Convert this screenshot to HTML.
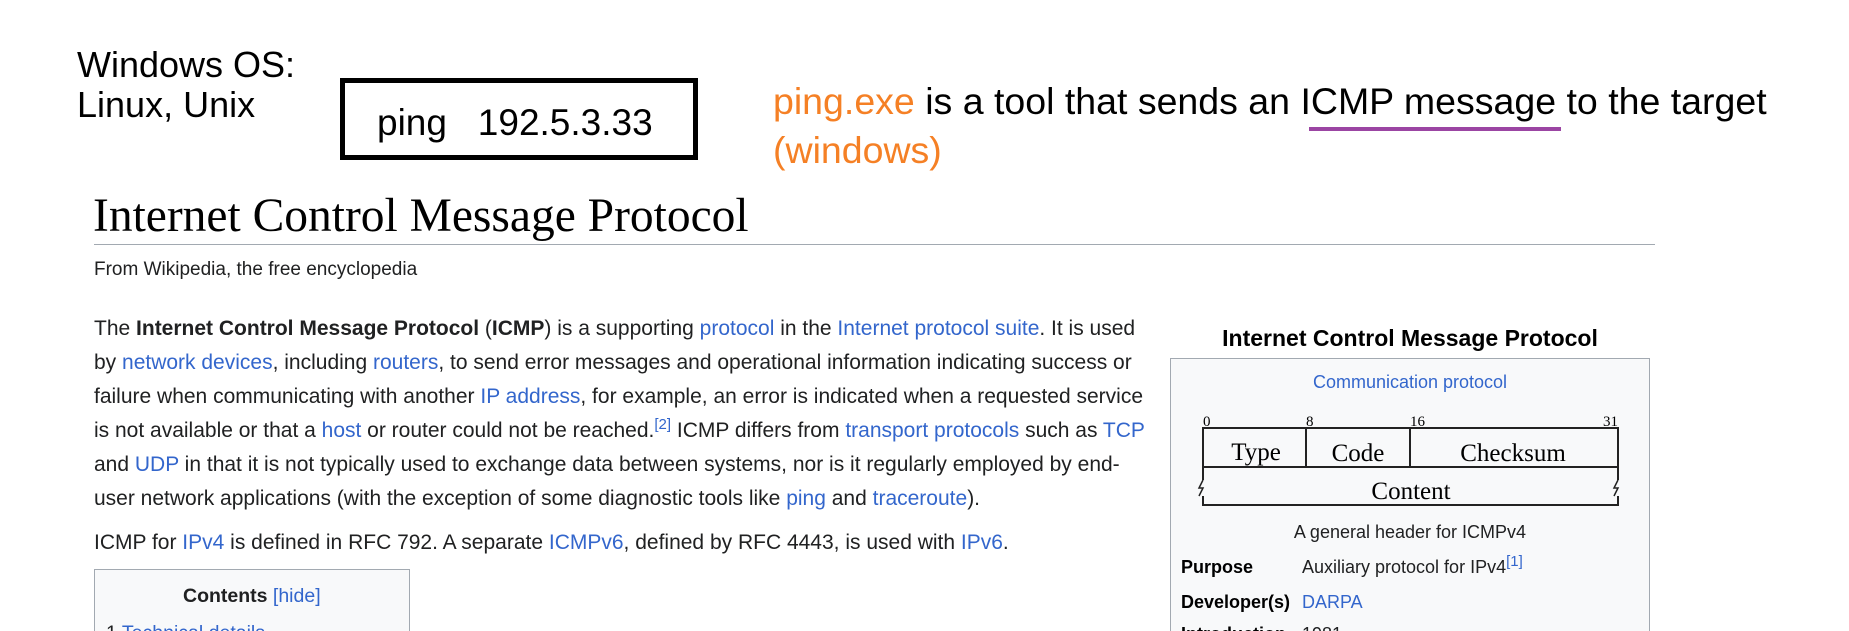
<!DOCTYPE html>
<html><head><meta charset="utf-8"><style>
*{margin:0;padding:0;box-sizing:border-box}
html,body{width:1849px;height:631px;overflow:hidden;background:#fff}
body{font-family:"Liberation Sans",sans-serif;color:#202122}
#w{position:relative;width:1849px;height:631px;overflow:hidden}
.a{position:absolute;white-space:nowrap}
.big{font-size:36px;color:#000;line-height:1}
.or{color:#f58025}
a,.l{color:#3366cc;text-decoration:none}
.body{font-size:21px;line-height:34px;color:#202122}
sup{font-size:15px;line-height:0;vertical-align:super}
.ib{position:absolute;left:1170px;top:358px;width:480px;height:273px;background:#f8f9fa;border:1px solid #a2a9b1;border-bottom:none}
</style></head><body><div id="w">
<div class="a big" style="left:77px;top:47px">Windows OS:</div>
<div class="a big" style="left:77px;top:87px">Linux, Unix</div>
<div class="a" style="left:340px;top:78px;width:358px;height:82px;border:5px solid #000"></div>
<div class="a big" style="left:377px;top:104px;font-size:37px">ping&nbsp;&nbsp;&nbsp;192.5.3.33</div>
<div class="a big" style="left:773px;top:83px;font-size:37.5px"><span class="or">ping.exe</span> is a tool that sends an ICMP message to the target</div>
<div class="a big or" style="left:773px;top:132px;font-size:37.5px">(windows)</div>
<div class="a" style="left:1309px;top:127px;width:252px;height:4px;background:#9b45a3"></div>

<div class="a" style="left:93px;top:188px;font-family:'Liberation Serif',serif;font-size:47.5px;color:#000;line-height:1.2">Internet Control Message Protocol</div>
<div class="a" style="left:94px;top:244px;width:1561px;height:1px;background:#a2a9b1"></div>
<div class="a" style="left:94px;top:259px;font-size:19px">From Wikipedia, the free encyclopedia</div>

<div class="a body" style="left:94px;top:312px">
The <b>Internet Control Message Protocol</b> (<b>ICMP</b>) is a supporting <a>protocol</a> in the <a>Internet protocol suite</a>. It is used<br>
by <a>network devices</a>, including <a>routers</a>, to send error messages and operational information indicating success or<br>
failure when communicating with another <a>IP address</a>, for example, an error is indicated when a requested service<br>
is not available or that a <a>host</a> or router could not be reached.<sup class="l">[2]</sup> ICMP differs from <a>transport protocols</a> such as <a>TCP</a><br>
and <a>UDP</a> in that it is not typically used to exchange data between systems, nor is it regularly employed by end-<br>
user network applications (with the exception of some diagnostic tools like <a>ping</a> and <a>traceroute</a>).
</div>
<div class="a body" style="left:94px;top:526px">ICMP for <a>IPv4</a> is defined in RFC 792. A separate <a>ICMPv6</a>, defined by RFC 4443, is used with <a>IPv6</a>.</div>

<div class="a" style="left:94px;top:569px;width:316px;height:62px;background:#f8f9fa;border:1px solid #a2a9b1;border-bottom:none"></div>
<div class="a" style="left:183px;top:585px;font-size:19.5px"><b>Contents</b> <span class="l">[hide]</span></div>
<div class="a" style="left:106px;top:622px;font-size:19.5px">1 <span class="l">Technical details</span></div>

<div class="a" style="left:1170px;top:325px;width:480px;text-align:center;font-size:23px;font-weight:bold;color:#000">Internet Control Message Protocol</div>
<div class="ib"></div>
<div class="a l" style="left:1170px;top:372px;width:480px;text-align:center;font-size:18px">Communication protocol</div>
<svg class="a" style="left:1195px;top:410px" width="440" height="105" viewBox="0 0 440 105">
<g font-family="Liberation Serif,serif" fill="#000">
<text x="8" y="16" font-size="15">0</text>
<text x="111" y="16" font-size="15">8</text>
<text x="215" y="16" font-size="15">16</text>
<text x="408" y="16" font-size="15">31</text>
<text x="61" y="50" font-size="25" text-anchor="middle">Type</text>
<text x="163" y="51" font-size="25" text-anchor="middle">Code</text>
<text x="318" y="51" font-size="25" text-anchor="middle">Checksum</text>
<text x="216" y="89" font-size="25" text-anchor="middle">Content</text>
</g>
<g fill="none" stroke="#222" stroke-width="2">
<path d="M8 18H423V95H8Z"/>
<path d="M8 57H423M111 18V57M215 18V57"/>
</g>
<rect x="1" y="70" width="12" height="16" fill="#f8f9fa"/>
<rect x="418" y="70" width="12" height="16" fill="#f8f9fa"/>
<path d="M8 70L4 78 8 78 4 86" stroke="#222" stroke-width="1.5" fill="none"/>
<path d="M423 70L419 78 423 78 419 86" stroke="#222" stroke-width="1.5" fill="none"/>
</svg>
<div class="a" style="left:1170px;top:522px;width:480px;text-align:center;font-size:18px">A general header for ICMPv4</div>
<div class="a" style="left:1181px;top:557px;font-size:18px;font-weight:bold;color:#000">Purpose</div>
<div class="a" style="left:1302px;top:557px;font-size:18px">Auxiliary protocol for IPv4<sup class="l">[1]</sup></div>
<div class="a" style="left:1181px;top:592px;font-size:18px;font-weight:bold;color:#000">Developer(s)</div>
<div class="a l" style="left:1302px;top:592px;font-size:18px">DARPA</div>
<div class="a" style="left:1181px;top:624px;font-size:18px;font-weight:bold;color:#000">Introduction</div>
<div class="a" style="left:1302px;top:624px;font-size:18px">1981</div>
</div></body></html>
